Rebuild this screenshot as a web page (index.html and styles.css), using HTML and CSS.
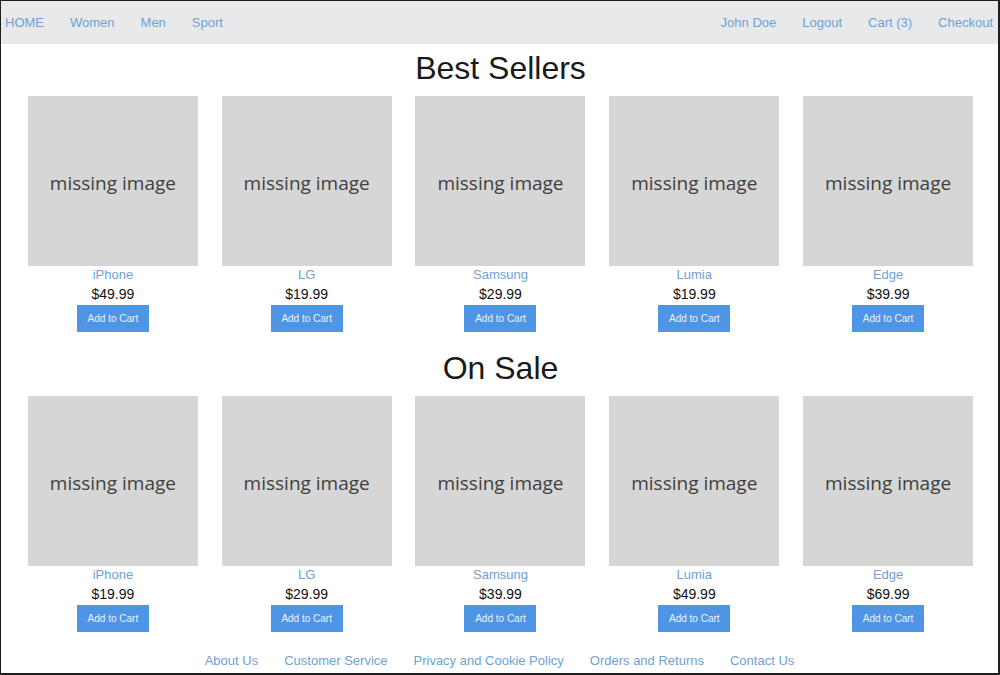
FILE: index.html
```html
<!DOCTYPE html>
<html lang="en">
<head>
<meta charset="utf-8">
<title>Shop</title>
<link rel="stylesheet" href="styles.css">
</head>
<body>
<div class="frame">
  <nav class="topnav">
    <div class="nav-left">
      <a href="#">HOME</a>
      <a href="#">Women</a>
      <a href="#">Men</a>
      <a href="#">Sport</a>
    </div>
    <div class="nav-right">
      <a href="#">John Doe</a>
      <a href="#">Logout</a>
      <a href="#">Cart (3)</a>
      <a href="#">Checkout</a>
    </div>
  </nav>

  <section class="section">
    <h2 class="section-title">Best Sellers</h2>
    <div class="products">
      <div class="product"><div class="thumb">missing image</div><a class="name" href="#">iPhone</a><div class="price">$49.99</div><button class="add">Add to Cart</button></div>
      <div class="product"><div class="thumb">missing image</div><a class="name" href="#">LG</a><div class="price">$19.99</div><button class="add">Add to Cart</button></div>
      <div class="product"><div class="thumb">missing image</div><a class="name" href="#">Samsung</a><div class="price">$29.99</div><button class="add">Add to Cart</button></div>
      <div class="product"><div class="thumb">missing image</div><a class="name" href="#">Lumia</a><div class="price">$19.99</div><button class="add">Add to Cart</button></div>
      <div class="product"><div class="thumb">missing image</div><a class="name" href="#">Edge</a><div class="price">$39.99</div><button class="add">Add to Cart</button></div>
    </div>
  </section>

  <section class="section second">
    <h2 class="section-title">On Sale</h2>
    <div class="products">
      <div class="product"><div class="thumb">missing image</div><a class="name" href="#">iPhone</a><div class="price">$19.99</div><button class="add">Add to Cart</button></div>
      <div class="product"><div class="thumb">missing image</div><a class="name" href="#">LG</a><div class="price">$29.99</div><button class="add">Add to Cart</button></div>
      <div class="product"><div class="thumb">missing image</div><a class="name" href="#">Samsung</a><div class="price">$39.99</div><button class="add">Add to Cart</button></div>
      <div class="product"><div class="thumb">missing image</div><a class="name" href="#">Lumia</a><div class="price">$49.99</div><button class="add">Add to Cart</button></div>
      <div class="product"><div class="thumb">missing image</div><a class="name" href="#">Edge</a><div class="price">$69.99</div><button class="add">Add to Cart</button></div>
    </div>
  </section>

  <footer class="footer">
    <a href="#">About Us</a>
    <a href="#">Customer Service</a>
    <a href="#">Privacy and Cookie Policy</a>
    <a href="#">Orders and Returns</a>
    <a href="#">Contact Us</a>
  </footer>
</div>
</body>
</html>
```

FILE: styles.css
```css
* { box-sizing: border-box; }
html, body { margin: 0; padding: 0; background: #ffffff; }
body {
  font-family: "Liberation Sans", Arial, Helvetica, sans-serif;
  color: #111;
}
.frame {
  width: 1000px;
  height: 675px;
  border: 1px solid #1e1e1e;
  border-right-width: 2px;
  border-bottom-width: 2px;
  overflow: hidden;
  display: flex;
  flex-direction: column;
}
a { color: #6fa1d6; text-decoration: none; }

.topnav {
  height: 43px;
  background: #e8e9eb;
  display: flex;
  justify-content: space-between;
  align-items: center;
  padding: 0 5px 0 4px;
  font-size: 13px;
}
.nav-left, .nav-right { display: flex; gap: 26px; }

.section { padding: 0 13px 0 15px; }
.section-title {
  margin: 0;
  height: 52px;
  line-height: 48px;
  text-align: center;
  font-size: 32px;
  font-weight: normal;
  color: #1a1a1a;
}
.second { margin-top: 12px; }

.products {
  display: grid;
  grid-template-columns: repeat(5, 1fr);
}
.product {
  display: flex;
  flex-direction: column;
  align-items: center;
}
.thumb {
  width: 170px;
  height: 170px;
  background: #d6d6d6;
  display: flex;
  align-items: center;
  justify-content: center;
  padding-top: 3px;
  font-family: "Open Sans", "Noto Sans", sans-serif;
  font-size: 19px;
  color: #404040;
}
.name {
  font-size: 13px;
  line-height: 18px;
}
.price {
  font-size: 14px;
  line-height: 20px;
  color: #111;
}
.add {
  width: 72px;
  height: 27px;
  margin-top: 1px;
  border: none;
  background: #4f95e6;
  color: #eaf2fc;
  font-family: "Liberation Sans", Arial, sans-serif;
  font-size: 10px;
  padding: 0;
  cursor: pointer;
}

.footer {
  margin-top: 21px;
  display: flex;
  justify-content: center;
  gap: 26px;
  font-size: 13px;
  line-height: 16px;
}
```
